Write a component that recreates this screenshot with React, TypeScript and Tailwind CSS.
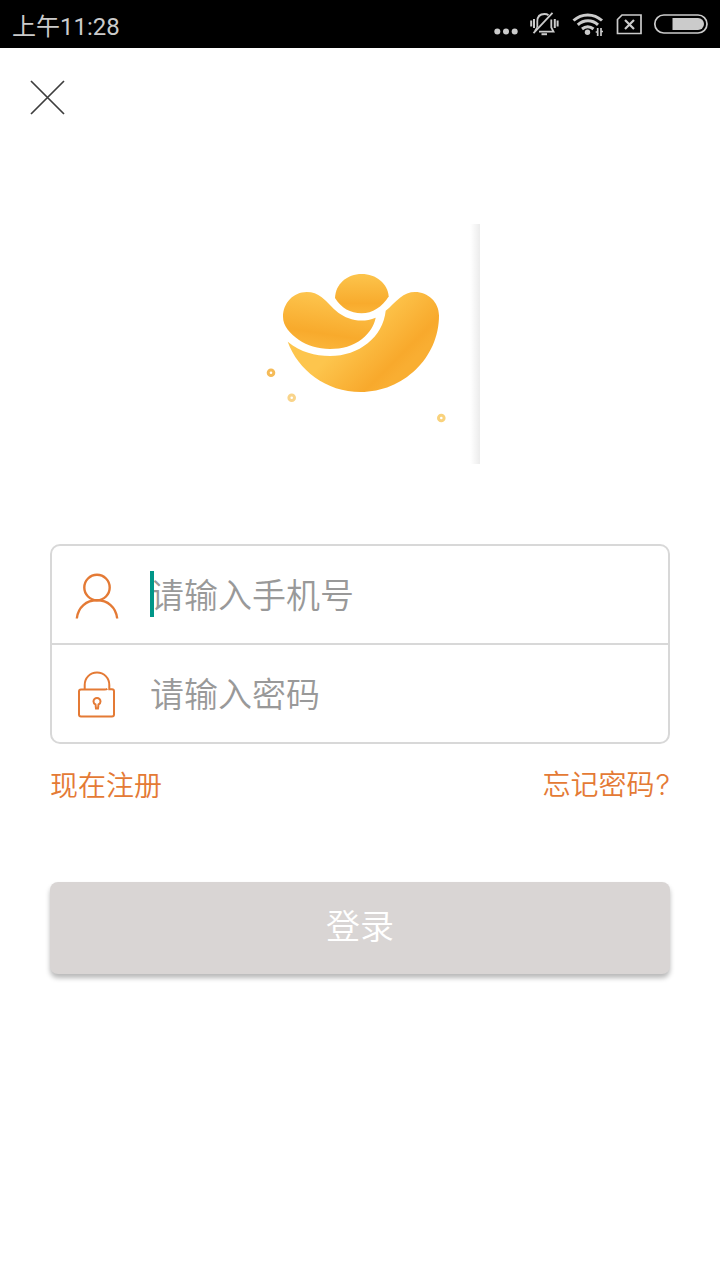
import { useState } from "react";
import type { InputHTMLAttributes, ReactNode } from "react";

type FieldProps = InputHTMLAttributes<HTMLInputElement> & {
  icon: ReactNode;
  showCaret?: boolean;
};

const StatusBar = () => (
  <div className="flex h-12 items-center justify-between bg-black pr-3 pl-3 text-[#cbcbcb]">
    <span className="pt-[5px] font-[Roboto,'Noto_Sans_CJK_SC',sans-serif] text-[24px] leading-none">上午11:28</span>
    <svg className="h-12 w-[216px]" viewBox="0 0 216 48" fill="none" stroke="currentColor">
      {/* More notifications */}
      <g fill="currentColor" stroke="none">
        <circle cx="5.3" cy="31.5" r="3" />
        <circle cx="14" cy="31.5" r="3" />
        <circle cx="22.7" cy="31.5" r="3" />
      </g>
      {/* Muted bell */}
      <g strokeWidth="1.8">
        <path d="M45.300 27.500V21.500c0-5 2.800-7.500 7.200-7.500 1.700 0 3 .4 4 1.200M59.300 19.500v8l2.200 4.200H47" />
        <path d="M43 31l2.300-3.500" />
        <path d="M60.500 12.800 41.500 33.200" />
        <path d="M42 19v9M39.200 20.500v6" strokeWidth="2" />
        <path d="M62.800 19v9M65.600 20.500v6" strokeWidth="2" />
        <path d="M49.500 34.200h5.500" strokeWidth="2" />
      </g>
      {/* Wifi with data arrows */}
      <g strokeWidth="3">
        <path d="M81.500 20.500c8.200-7.500 20.300-7.500 28.500 0" />
        <path d="M85.800 24.800c6-5.400 14.300-5.400 20.200 0" />
        <path d="M90 29c3.500-2.900 8-2.900 11.500 0" />
      </g>
      <circle cx="95.500" cy="32.200" r="2.700" fill="currentColor" stroke="none" />
      <path d="M105.700 28v8M109 28v8" strokeWidth="1.700" />
      <path d="M103.700 32h2M109 31.500h2" strokeWidth="1.700" />
      {/* Missing sim */}
      <path d="M125.500 19.500l4.500-4.500h19v18.500h-23.500z" strokeWidth="1.700" />
      <path d="M133 20l9 9M142 20l-9 9" strokeWidth="2.200" />
      {/* Battery */}
      <rect x="162.800" y="15" width="52.200" height="18" rx="9" strokeWidth="1.700" />
      <path d="M180.500 18H206a6 6 0 0 1 0 12H180.500z" fill="currentColor" stroke="none" />
    </svg>
  </div>
);

const Logo = () => (
  <div className="h-60 w-60 bg-linear-to-r from-white from-96% to-[#ececec]">
    <svg className="h-60 w-60" viewBox="0 0 240 240" fill="none">
      <defs>
        <linearGradient id="ball" x1="0" y1="0" x2="0" y2="1">
          <stop offset="0" stopColor="#fcc44c" />
          <stop offset=".75" stopColor="#f8ab2d" />
          <stop offset="1" stopColor="#fab438" />
        </linearGradient>
        <linearGradient id="leftLobe" x1="85" y1="70" x2="77" y2="122" gradientUnits="userSpaceOnUse">
          <stop offset="0" stopColor="#fdc54e" />
          <stop offset=".75" stopColor="#f8aa2c" />
          <stop offset="1" stopColor="#fab338" />
        </linearGradient>
        <linearGradient id="rightLobe" x1="104" y1="97" x2="157" y2="151" gradientUnits="userSpaceOnUse">
          <stop offset=".2" stopColor="#fdc54d" />
          <stop offset=".85" stopColor="#f8a92c" />
          <stop offset="1" stopColor="#f9ae32" />
        </linearGradient>
      </defs>
      <path fill="url(#ball)" d="M95 74C95.500 60 107 50 121.700 50c14.500 0 26 9.500 27 22.500C142 83 132.500 89.300 121.500 89.300S101 84 95 74Z" />
      <path fill="url(#leftLobe)" d="M43 92.700C43 79 53.500 68 66.700 68c6 0 10.500 1.800 15 5.300 6.300 4.700 10.300 10.700 16.600 15.400 9 6.600 22.700 11 37.400 5C134 102 129.500 109 122 115c-9 7-20 10-32 10-12 0-23-3.500-31-9-9-6.300-16-14-16-23.300Z" />
      <path fill="url(#rightLobe)" d="M47.700 117.700C61 128.300 75 132 90 132c29 0 53-19 55.700-45.300 5-3.700 9-9 14.300-13 4.500-3.700 9.500-5.700 15-5.700 13 0 24 10 24 23.500C199 134 163 168 120.700 168 86 168 58 146 47.700 117.700Z" />
      <circle cx="31" cy="148.700" r="2.800" stroke="#f5bb58" strokeWidth="3" />
      <circle cx="51.700" cy="173.700" r="2.800" stroke="#f9d48a" strokeWidth="3" />
      <circle cx="201.300" cy="194" r="2.800" stroke="#f9d27c" strokeWidth="3" />
    </svg>
  </div>
);

const UserIcon = () => (
  <svg className="h-12 w-11" viewBox="0 0 44 48" fill="none" stroke="#e47a35" strokeWidth="2.400">
    <circle cx="22" cy="16.500" r="12.700" />
    <path d="M1.800 47.500C3 36 11.500 29.300 22 29.300S41 36 42.200 47.500" />
  </svg>
);

const LockIcon = () => (
  <svg className="h-12 w-11" viewBox="0 0 44 48" fill="none" stroke="#e47a35" strokeWidth="2">
    <path d="M9.700 19.500V15C9.700 8 15 2.500 22 2.500s12.300 5.500 12.300 12.500v4.300H37q2 0 2 2V44.500q0 2-2 2H6q-2 0-2-2V21.500Q4 19.500 6 19.500H29.500q2 0 2.800-.8" />
    <path d="M20.500 34.500c-1.300-.6-2-1.700-2-3a3.500 3.500 0 0 1 7 0c0 1.300-.7 2.400-2 3l-.5 4h-2z" />
  </svg>
);

const Field = ({ icon, showCaret, ...inputProps }: FieldProps) => (
  <label className="flex h-[97px] items-center pl-[23px]">
    {icon}
    <div className="relative ml-[31px] flex-1">
      <input
        className="block h-[50px] w-full pb-0.5 text-[34px] font-[350] text-[#333] outline-none placeholder:text-[#999] placeholder:opacity-100"
        {...inputProps}
      />
      {showCaret && <span className="absolute top-px left-0 h-[46px] w-1 bg-[#009688]" />}
    </div>
  </label>
);

const App = () => {
  const [phone, setPhone] = useState("");
  const [password, setPassword] = useState("");

  return (
    <div className="min-h-[1280px] w-[720px] bg-white font-['Noto_Sans_CJK_SC',sans-serif]">
      <StatusBar />

      <button type="button" aria-label="关闭" className="mt-8 ml-[30px] block">
        <svg className="h-[35px] w-[35px]" viewBox="0 0 35 35" stroke="#3d3d3d" strokeWidth="1.700">
          <path d="M1 1l33 33M34 1L1 34" />
        </svg>
      </button>

      <div className="mt-[109px] flex justify-center">
        <Logo />
      </div>

      <form className="mx-[50px] mt-20" onSubmit={(e) => e.preventDefault()}>
        <div className="rounded-[10px] border-2 border-[#d8d8d8]">
          <Field
            icon={<UserIcon />}
            placeholder="请输入手机号"
            value={phone}
            onChange={(e) => setPhone(e.target.value)}
            showCaret={!phone}
          />
          <div className="h-0.5 bg-[#d8d8d8]" />
          <Field
            icon={<LockIcon />}
            type="password"
            placeholder="请输入密码"
            value={password}
            onChange={(e) => setPassword(e.target.value)}
          />
        </div>

        <div className="mt-5 flex h-10 items-center justify-between text-[28px] font-[350] text-[#e47a35]">
          <a>现在注册</a>
          <a>
            忘记密码<span className="ml-px font-[Inter] text-[29px] font-light">?</span>
          </a>
        </div>

        <button
          type="submit"
          className="mt-[78px] h-[92px] w-full rounded-lg bg-[#d9d5d4] pb-[7px] text-[34px] font-[350] text-white shadow-[0_4px_5px_rgba(0,0,0,0.28)]"
        >
          登录
        </button>
      </form>
    </div>
  );
};

export default App;
